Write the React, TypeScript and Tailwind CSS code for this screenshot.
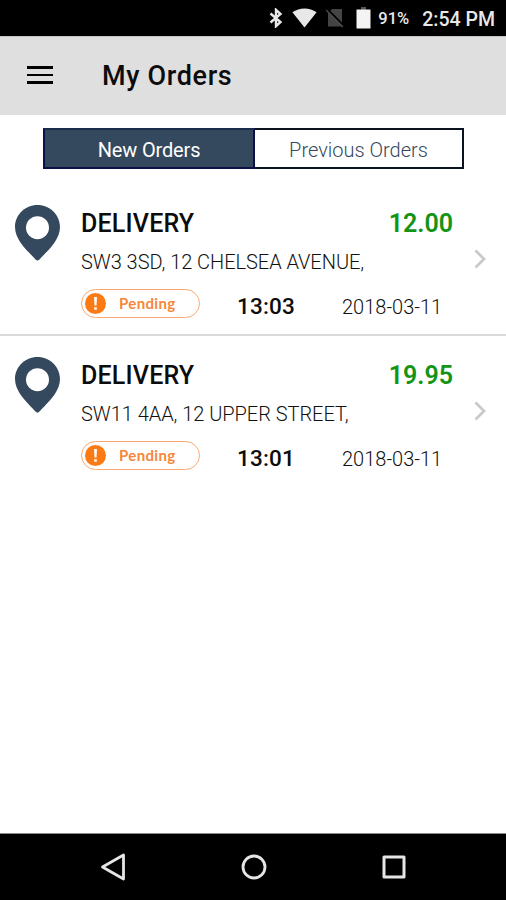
type Order = {
  id: number;
  type: string;
  total: string;
  address: string;
  status: string;
  time: string;
  date: string;
};

const orders: Order[] = [
  { id: 1, type: "DELIVERY", total: "12.00", address: "SW3 3SD, 12 CHELSEA AVENUE,", status: "Pending", time: "13:03", date: "2018-03-11" },
  { id: 2, type: "DELIVERY", total: "19.95", address: "SW11 4AA, 12 UPPER STREET,", status: "Pending", time: "13:01", date: "2018-03-11" },
];

export default function App() {
  return (
    <div className="flex h-[900px] w-[506px] flex-col overflow-hidden bg-white font-['Roboto',sans-serif] text-[#0c0c0c]">
      <StatusBar />
      <Header title="My Orders" />
      <main className="flex-1">
        <OrderTabs />
        <ul className="mt-[15px]">
          {orders.map((order, index) => (
            <OrderRow isLast={index === orders.length - 1} key={order.id} order={order} />
          ))}
        </ul>
      </main>
      <NavigationBar />
    </div>
  );
}

function StatusBar() {
  return (
    <div className="flex h-9 shrink-0 items-center justify-end bg-black pr-[11px] text-[#e8e8e8]">
      <svg className="mr-[9px] h-5 w-[14px]" fill="none" stroke="currentColor" strokeWidth="2.4" viewBox="0 0 14 20">
        <path d="M1.500 5.500 11.500 14 7 18.200V1.800L11.500 6l-10 8.500" />
      </svg>
      <svg className="mr-[9px] h-5 w-[25px]" fill="currentColor" viewBox="0 0 25 20">
        <path d="M12.500 19.500.4 4.200C4 1.700 8 .4 12.500.4S21 1.700 24.600 4.200z" />
      </svg>
      <svg className="mr-[12px] h-5 w-[18px]" viewBox="0 0 18 20">
        <path d="M6 1h10v17.500H2V5z" fill="#444" />
        <path d="M1.500 1.500 18 18" stroke="#000" strokeWidth="2" />
        <path d="M0 2 17 19" stroke="#4b4b4b" strokeWidth="1.500" />
      </svg>
      <svg className="mr-[7px] h-[22px] w-[15px]" viewBox="0 0 15 22">
        <path d="M5 0h5v3H5z" fill="#555" />
        <path d="M.5 2.500h14V21.500H.5z" fill="#f4f4f4" />
      </svg>
      <span className="mr-[12px] mt-[2px] w-[32px] whitespace-nowrap text-[16.500px] font-medium leading-5">91%</span>
      <span className="mt-[3px] whitespace-nowrap text-[19.500px] font-medium leading-6">2:54 PM</span>
    </div>
  );
}

function Header({ title }: { title: string }) {
  return (
    <header className="flex h-[79px] shrink-0 items-center border-t border-[#c4c4c4] bg-[#dfdfdf] pl-[27px]">
      <button aria-label="Menu" className="flex w-[26px] -translate-y-px flex-col gap-[5px]">
        <span className="h-[2.500px] w-full bg-black" />
        <span className="h-[2.500px] w-full bg-black" />
        <span className="h-[2.500px] w-full bg-black" />
      </button>
      <h1 className="ml-[49px] mt-px text-[27px] font-medium tracking-[0.65px]">{title}</h1>
    </header>
  );
}

function OrderTabs() {
  return (
    <div className="ml-[43px] mt-[13px] flex h-[41px] w-[421px] text-[20px]">
      <button className="w-[212px] border-2 border-[#0c1046] border-t-[#1c2c4c] bg-[#35495e] pt-[2px] text-white tracking-[-0.15px]">New Orders</button>
      <button className="flex-1 border-2 border-l-0 border-[#0b1220] bg-white pt-[2px] font-light text-[#35495e]">Previous Orders</button>
    </div>
  );
}

function OrderRow({ isLast, order }: { isLast: boolean; order: Order }) {
  return (
    <li className={`flex h-[152px] items-start ${isLast ? "" : "border-b-2 border-[#d9d9d9]"}`}>
      <svg className="ml-[15px] mt-[21px] h-[56px] w-[45px] shrink-0" viewBox="0 0 45 56">
        <path
          d="M22.500 0C10 0 0 9.800 0 22c0 5.700 2.400 11.100 5.600 15.700C10.600 44.700 17 50.500 20.800 54.800c1 1.100 2.400 1.100 3.400 0C28 50.500 34.400 44.700 39.400 37.700 42.600 33.100 45 27.700 45 22 45 9.800 35 0 22.500 0zm0 11.200a11.500 11.500 0 1 1 0 23 11.500 11.500 0 0 1 0-23z"
          fill="#35495e"
          fillRule="evenodd"
        />
      </svg>
      <div className="ml-[21px] w-[372px] shrink-0">
        <div className="mt-[25px] flex h-[30px] items-center justify-between text-[25px]">
          <h2 className="font-medium tracking-[0.2px]">{order.type}</h2>
          <span className="font-semibold text-[#149414]">{order.total}</span>
        </div>
        <p className="mt-[11px] h-6 whitespace-nowrap text-[20px] font-light leading-6 tracking-[-0.04px] text-[#111]">{order.address}</p>
        <div className="mt-[14px] flex h-[30px] items-center">
          <StatusBadge label={order.status} />
          <span className="ml-[37px] mt-[7px] w-[60px] text-[22.500px] font-medium tracking-[0.2px]">{order.time}</span>
          <span className="ml-[45px] mt-[7px] whitespace-nowrap text-[20px] font-light text-[#111]">{order.date}</span>
        </div>
      </div>
      <svg className="ml-[21px] mt-[65px] h-5 w-3" fill="none" stroke="#c9c9c9" strokeWidth="2.800" viewBox="0 0 12 20">
        <path d="m1.500 1.500 8.500 8.500-8.500 8.500" />
      </svg>
    </li>
  );
}

function StatusBadge({ label }: { label: string }) {
  return (
    <div className="flex h-[29px] w-[119px] shrink-0 items-center rounded-full border-[1.500px] border-[#f9a873] pl-[3px] text-[#f5873a]">
      <svg className="h-[21px] w-[21px]" viewBox="0 0 21 21">
        <circle cx="10.500" cy="10.500" fill="#fb7a14" r="10.500" />
        <path d="M9 4h3l-.5 8.500h-2zM9.200 14.200h2.600v2.500H9.200z" fill="#fff" />
      </svg>
      <span className="ml-[13px] font-['Lato',sans-serif] text-[15px] font-bold tracking-[0.35px]">{label}</span>
    </div>
  );
}

function NavigationBar() {
  return (
    <nav className="flex h-[67px] shrink-0 items-center justify-between border-t border-[#888] bg-black pl-[99px] pr-[98px] text-[#e6e6e6]">
      <svg className="h-7 w-7" fill="none" stroke="currentColor" strokeLinejoin="round" strokeWidth="2.800" viewBox="0 0 28 28">
        <path d="M24.500 2v24L3.500 14z" />
      </svg>
      <svg className="h-7 w-7" fill="none" stroke="currentColor" strokeWidth="2.800" viewBox="0 0 28 28">
        <circle cx="14" cy="14" r="11" />
      </svg>
      <svg className="h-7 w-7" fill="none" stroke="currentColor" strokeLinejoin="round" strokeWidth="3" viewBox="0 0 28 28">
        <path d="M4 4h20v20H4z" />
      </svg>
    </nav>
  );
}
